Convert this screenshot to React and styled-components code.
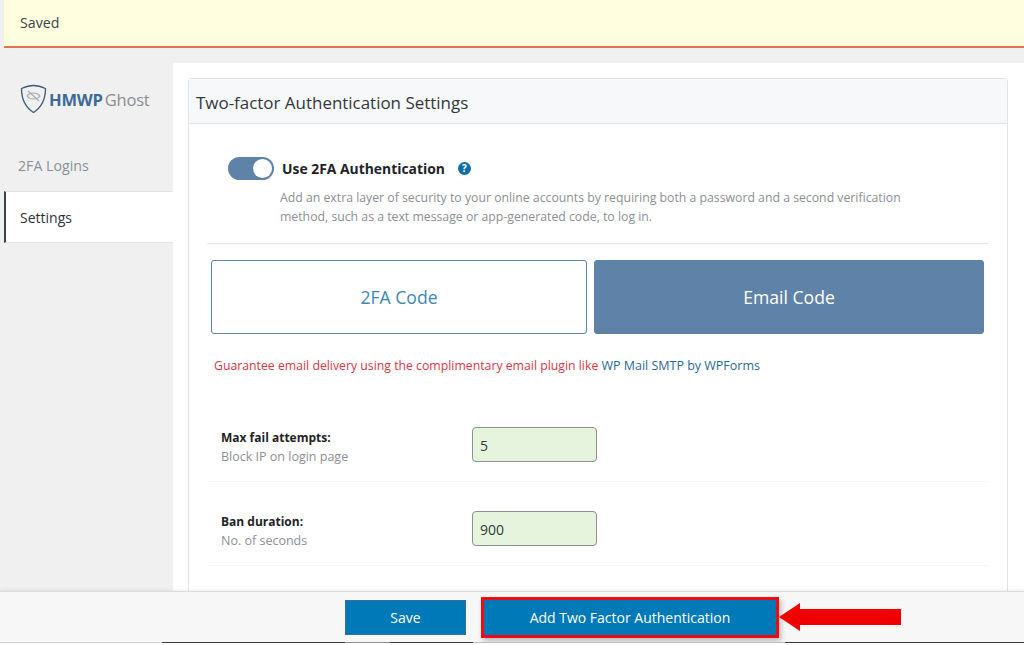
import React from "react";
import styled, { createGlobalStyle } from "styled-components";

const GlobalStyle = createGlobalStyle`
  html, body {
    margin: 0;
    padding: 0;
    background: #fff;
    font-family: "Open Sans", "Noto Sans", sans-serif;
    overflow: hidden;
  }
  * { box-sizing: border-box; }
`;

const Page = styled.div`
  position: relative;
  width: 1024px;
  height: 645px;
  padding-left: 4px;
  background: #f0f0f1;
  overflow: hidden;
`;

const Notice = styled.div`
  height: 48px;
  padding: 14px 16px 0;
  background: #ffffe0;
  border-bottom: 2px solid #e2714f;
  font-size: 14.2px;
  line-height: 18px;
  color: #3c434a;
`;

const Columns = styled.div`
  display: flex;
  margin-top: 15px;
`;

const SideBar = styled.aside`
  width: 169px;
  flex: none;
`;

const Logo = styled.div`
  display: flex;
  align-items: center;
  height: 46px;
  margin-top: 13px;
  margin-bottom: 17px;
  padding-left: 16px;
  gap: 2px;
  font-size: 16.5px;
  letter-spacing: -0.2px;
`;

const LogoBlue = styled.b`
  color: #3d6a99;
  font-weight: 700;
`;

const LogoGrey = styled.span`
  color: #8a8d90;
`;

const NavItem = styled.div`
  display: flex;
  align-items: center;
  height: 52px;
  padding-left: ${(p) => (p.$active ? "14px" : "12px")};
  font-size: ${(p) => (p.$active ? "14px" : "14.2px")};
  color: ${(p) => (p.$active ? "#2c3338" : "#8c8f94")};
  background: ${(p) => (p.$active ? "#fff" : "transparent")};
  border-left: 2px solid ${(p) => (p.$active ? "#3a4450" : "transparent")};
  border-top: 1px solid ${(p) => (p.$active ? "#e4e4e4" : "transparent")};
  border-bottom: 1px solid ${(p) => (p.$active ? "#e4e4e4" : "transparent")};
`;

const Main = styled.main`
  flex: 1;
  height: 580px;
  padding: 15px 17px 0 15px;
  background: #fff;
`;

const Card = styled.section`
  height: 560px;
  border: 1px solid #e2e4e7;
  border-radius: 3px;
`;

const CardHeader = styled.h3`
  height: 45px;
  margin: 0;
  padding: 12px 7px 0;
  background: #f6f8f9;
  border-bottom: 1px solid #e2e4e7;
  font-size: 16.95px;
  line-height: 23px;
  font-weight: 400;
  color: #32373c;
`;

const CardBody = styled.div`
  padding: 33px 19px 0 18px;
`;

const SwitchRow = styled.div`
  display: flex;
  align-items: center;
  padding-left: 21px;
  height: 22px;
`;

const Track = styled.span`
  position: relative;
  display: block;
  width: 46px;
  height: 23px;
  border-radius: 12px;
  background: #5f82a8;
`;

const Knob = styled.span`
  position: absolute;
  top: 2px;
  right: 2px;
  width: 19px;
  height: 19px;
  border-radius: 50%;
  background: #fff;
`;

const SwitchLabel = styled.span`
  margin-left: 8px;
  font-size: 13.9px;
  font-weight: 700;
  color: #1d2327;
`;

const HelpBadge = styled.span`
  display: flex;
  align-items: center;
  justify-content: center;
  width: 13px;
  height: 13px;
  margin-left: 13px;
  border-radius: 50%;
  background: #0e6ea8;
  color: #fff;
  font-size: 10px;
  font-weight: 700;
`;

const Description = styled.p`
  margin: 9px 0 0 73px;
  width: 630px;
  font-size: 12.28px;
  line-height: 19px;
  color: #8c8f94;
`;

const Divider = styled.hr`
  margin: 17px 0 0;
  border: 0;
  border-top: 1px solid #e3e5e8;
`;

const Tabs = styled.div`
  display: flex;
  gap: 7px;
  margin: 16px 4px 0;
`;

const Tab = styled.div`
  display: flex;
  align-items: center;
  justify-content: center;
  width: ${(p) => (p.$active ? "390px" : "376px")};
  height: 74px;
  border: 1px solid #5f82a8;
  border-radius: 3px;
  font-size: 17.6px;
  color: ${(p) => (p.$active ? "#fff" : "#3d87b8")};
  background: ${(p) => (p.$active ? "#5f82a8" : "#fff")};
`;

const Warning = styled.p`
  margin: 23px 0 0 7px;
  font-size: 12.27px;
  line-height: 18px;
  color: #dc3545;
`;

const PluginLink = styled.a`
  font-size: 12.49px;
  color: #1f6a9a;
`;

const FieldRow = styled.div`
  display: flex;
  padding-left: 14px;
  border-bottom: 1px solid #f6f6f6;
  margin-top: ${(p) => (p.$first ? "53px" : "0")};
  padding-top: ${(p) => (p.$first ? "0" : "30px")};
  height: ${(p) => (p.$first ? "54px" : "84px")};
`;

const FieldText = styled.div`
  width: 251px;
  flex: none;
`;

const FieldTitle = styled.div`
  font-size: 12px;
  line-height: 20px;
  font-weight: 700;
  color: #1d2327;
`;

const FieldHint = styled.div`
  font-size: 12.5px;
  line-height: 18px;
  color: #8c8f94;
`;

const NumberInput = styled.input`
  width: 125px;
  height: 35px;
  margin-top: -1px;
  padding: 1px 7px 0;
  border: 1px solid #8c8f94;
  border-radius: 4px;
  background: #e6f4dd;
  font-family: inherit;
  font-size: 14px;
  color: #32373c;
`;

const Footer = styled.footer`
  position: absolute;
  left: 0;
  right: 0;
  top: 591px;
  height: 51px;
  display: flex;
  align-items: center;
  padding-left: 345px;
  background: #f7f7f7;
  border-top: 1px solid #dcdcdc;
  box-shadow: 0 -1px 3px rgba(0, 0, 0, 0.08);
`;

const SaveButton = styled.button`
  width: 121px;
  height: 35px;
  border: 1px solid #3d6a99;
  background: #0079b8;
  color: #fff;
  font-family: inherit;
  font-size: 14px;
`;

const AddButton = styled(SaveButton)`
  width: 298px;
  height: 41px;
  margin-left: 15px;
  border: 3px solid #f00a14;
  box-shadow: 2px 3px 5px rgba(0, 0, 0, 0.25);
`;

const Arrow = styled.svg`
  display: block;
  flex: none;
`;

const BottomEdge = styled.div`
  position: absolute;
  left: 0;
  right: 0;
  top: 642px;
  height: 3px;
  background: linear-gradient(
      90deg,
      #d4d4d4 0 162px,
      #3a3a3a 162px 345px,
      #8e8e8e 345px 390px,
      #3a3a3a 390px 473px,
      #bdbdbd 473px 785px,
      #3a3a3a 785px
    )
    top / 100% 1px no-repeat #fff;
`;

export default function App() {
  return (
    <Page>
      <GlobalStyle />
      <Notice>Saved</Notice>
      <Columns>
        <SideBar>
          <Logo>
            <svg width="27" height="30" viewBox="0 0 27 30" fill="none">
              <path d="M1.5 4.5 C6 2.5 9 1.5 13.5 1.5 C18 1.5 21 2.5 25.5 4.5 C25.5 14 22 23 13.5 28.5 C5 23 1.5 14 1.5 4.5 Z" stroke="#3f5a78" strokeWidth="1.3" />
              <path d="M7 12 C10 8 17 8 20 12 C17 16 10 16 7 12 Z" stroke="#a9adb1" strokeWidth="1.2" />
              <path d="M8 7 L19 17" stroke="#a9adb1" strokeWidth="1.2" />
            </svg>
            <LogoBlue>HMWP</LogoBlue>
            <LogoGrey>Ghost</LogoGrey>
          </Logo>
          <NavItem>2FA Logins</NavItem>
          <NavItem $active>Settings</NavItem>
        </SideBar>
        <Main>
          <Card>
            <CardHeader>Two-factor Authentication Settings</CardHeader>
            <CardBody>
              <SwitchRow>
                <Track><Knob /></Track>
                <SwitchLabel>Use 2FA Authentication</SwitchLabel>
                <HelpBadge>?</HelpBadge>
              </SwitchRow>
              <Description>
                Add an extra layer of security to your online accounts by requiring both a password and a second verification method, such as a text message or app-generated code, to log in.
              </Description>
              <Divider />
              <Tabs>
                <Tab>2FA Code</Tab>
                <Tab $active>Email Code</Tab>
              </Tabs>
              <Warning>
                Guarantee email delivery using the complimentary email plugin like <PluginLink>WP Mail SMTP by WPForms</PluginLink>
              </Warning>
              <FieldRow $first>
                <FieldText>
                  <FieldTitle>Max fail attempts:</FieldTitle>
                  <FieldHint>Block IP on login page</FieldHint>
                </FieldText>
                <NumberInput defaultValue="5" />
              </FieldRow>
              <FieldRow>
                <FieldText>
                  <FieldTitle>Ban duration:</FieldTitle>
                  <FieldHint>No. of seconds</FieldHint>
                </FieldText>
                <NumberInput defaultValue="900" />
              </FieldRow>
            </CardBody>
          </Card>
        </Main>
      </Columns>
      <Footer>
        <SaveButton>Save</SaveButton>
        <AddButton>Add Two Factor Authentication</AddButton>
        <Arrow width="122" height="28" viewBox="0 0 122 28">
          <path d="M0 14 L21 0 V6 H122 V22 H21 V28 Z" fill="#f00000" />
        </Arrow>
      </Footer>
      <BottomEdge />
    </Page>
  );
}
